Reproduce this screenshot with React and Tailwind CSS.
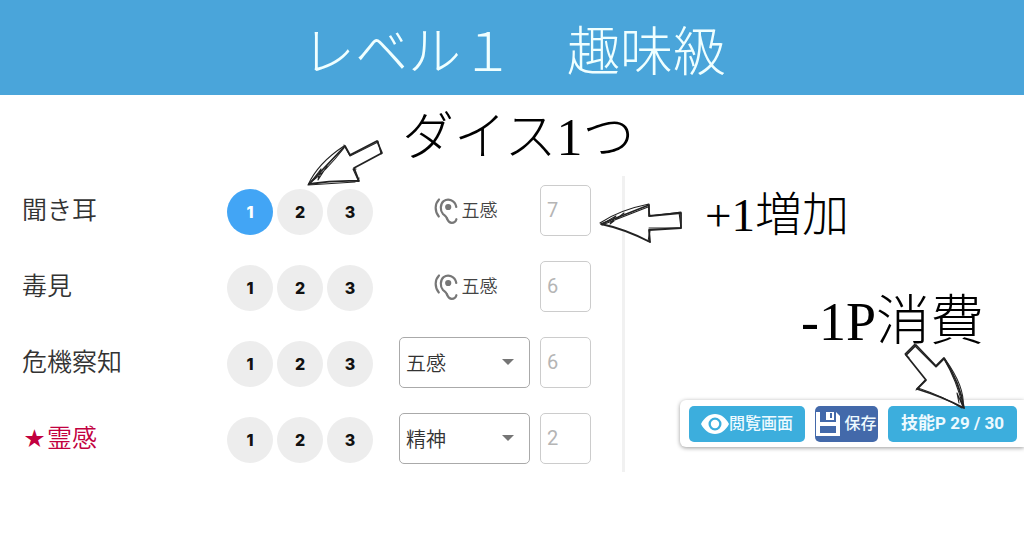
import React, { useState } from 'react';
import clsx from 'clsx';

const sans = "font-['Roboto','Noto_Sans_CJK_JP',sans-serif]";
const serif = "font-['Liberation_Serif','Noto_Sans_CJK_JP',serif]";

const initialSkills = [
  { name: '聞き耳', level: 1, attribute: '五感', value: 7 },
  { name: '毒見', level: 0, attribute: '五感', value: 6 },
  { name: '危機察知', level: 0, attribute: '五感', value: 6, options: ['五感', '知力'] },
  { name: '霊感', level: 0, attribute: '精神', value: 2, options: ['精神', '五感'], special: true },
];

const EarIcon = () => (
  <svg viewBox="0 0 24 28" className="h-7 w-6 shrink-0" fill="none" stroke="#777" strokeWidth="2.2" strokeLinecap="round" aria-hidden="true">
    <path d="M5 2.5C.6 7 .6 14.5 4.8 19.5" />
    <path d="M13 21.5C11.8 18.8 10.6 18.6 9 17 5.8 13.5 6.2 7 9.6 4.2 14 1 21 3 22.3 10" />
    <path d="M13 21.5c1 2.6 2 4.3 4.8 4.3 2.3 0 4-1.4 4.6-3.6" />
    <circle cx="14.2" cy="10" r="3.1" fill="#777" stroke="none" />
  </svg>
);

const EyeIcon = () => (
  <svg viewBox="0 0 28 20" className="h-5 w-7 shrink-0" aria-hidden="true">
    <path fill="#fff" fillRule="evenodd" d="M0 10C3 4 8 0 14 0s11 4 14 10c-3 6-8 10-14 10S3 16 0 10Zm14-6.5a6.5 6.5 0 1 0 0 13 6.5 6.5 0 0 0 0-13Z" />
    <circle cx="14" cy="10" r="4.2" fill="#fff" />
  </svg>
);

const SaveIcon = () => (
  <svg viewBox="0 0 24 24" className="size-6 shrink-0" aria-hidden="true">
    <path fill="#fff" fillRule="evenodd" d="M0 0h4v10h16V0l4 4v20H0ZM4 14v7h16v-7Z" />
    <path fill="#fff" fillRule="evenodd" d="M10 0h8v8h-8ZM14 1v5h2V1Z" />
  </svg>
);

// Hand-drawn arrows: one main outline and a looser second pass
const SketchArrow = ({ className, viewBox, outline, loose }) => (
  <svg viewBox={viewBox} className={clsx('pointer-events-none absolute', className)} fill="none" stroke="#222" strokeLinecap="round" strokeLinejoin="round" aria-hidden="true">
    <path d={outline} fill="#fff" strokeWidth="1.8" />
    <path d={loose} strokeWidth="1.1" />
  </svg>
);

const SkillRow = ({ skill }) => {
  const [level, setLevel] = useState(skill.level);

  return (
    <li className="flex h-13 items-center">
      <span className={clsx('flex flex-1 items-center pt-0.5 text-[25px] leading-8 font-[350]', skill.special ? 'text-[#c2003f]' : 'text-[#333]')}>
        {skill.special && <span className="w-[25px] text-center text-xl leading-8">★</span>}
        {skill.name}
      </span>
      <div className="mt-1 flex gap-1" role="group" aria-label={skill.name}>
        {[1, 2, 3].map((n) => (
          <button
            key={n}
            type="button"
            aria-pressed={level === n}
            onClick={() => setLevel(level === n ? 0 : n)}
            className={clsx(
              "size-[46px] rounded-full font-['Inter',sans-serif] text-base font-extrabold",
              level === n ? 'bg-[#42a5f5] text-white' : 'bg-[#ededed] text-[#111]'
            )}
          >
            {n}
          </button>
        ))}
      </div>
      <div className="ml-[26px] w-[131px]">
        {skill.options ? (
          <div className="relative">
            <select
              aria-label={`${skill.name} ${skill.attribute}`}
              defaultValue={skill.attribute}
              className="h-[51px] w-full appearance-none rounded-[5px] border border-[#aaa] bg-white pt-1 pl-1.5 text-xl font-[350] text-[#333]"
            >
              {skill.options.map((o) => (
                <option key={o}>{o}</option>
              ))}
            </select>
            <svg viewBox="0 0 12 6" className="pointer-events-none absolute top-[22px] right-4 h-[6px] w-3" fill="#757575" aria-hidden="true">
              <path d="M0 0h12L6 6Z" />
            </svg>
          </div>
        ) : (
          <div className="flex items-center justify-center gap-1 pt-0.5 pl-0.5 text-lg font-[350] text-[#444]">
            <EarIcon />
            <span>{skill.attribute}</span>
          </div>
        )}
      </div>
      <input
        disabled
        aria-label={`${skill.name} 値`}
        defaultValue={skill.value}
        className="ml-2.5 h-[51px] w-[51px] rounded-[5px] border border-[#ccc] bg-white pl-1.5 text-xl text-[#b5b5b5]"
      />
    </li>
  );
};

const Toolbar = () => (
  <div className="flex h-[47px] items-center gap-2.5 rounded-l-md bg-white pr-[7px] pl-[9px] text-base font-bold text-[#eefaff] shadow-[0_1px_4px_rgba(0,0,0,0.4)]">
    <button type="button" className="flex h-9 w-[116px] items-center justify-center rounded-[5px] bg-[#3caedd] font-medium">
      <EyeIcon />
      <span>閲覧画面</span>
    </button>
    <button type="button" className="flex h-9 w-[63px] items-center justify-center gap-1 rounded-[5px] bg-[#4369aa] font-medium">
      <SaveIcon />
      <span>保存</span>
    </button>
    <button type="button" className="h-9 w-[129px] rounded-[5px] bg-[#3caedd] text-[17px]">
      技能P 29 / 30
    </button>
  </div>
);

export default function App() {
  return (
    <div className={clsx('min-h-screen bg-white', sans)}>
      <header className="flex h-[95px] items-center justify-center bg-[#4aa5da] pt-3 pl-1">
        <h1 className={clsx('text-[53px] leading-none font-light text-[#f0ffff]', serif)}>レベル１　趣味級</h1>
      </header>
      <main className={serif}>
        <div className="relative z-10 flex h-[81px] items-center pt-1 pl-[402px]">
          <p className="text-[52px] leading-none font-light text-black">ダイス1つ</p>
          <SketchArrow
            className="top-[44px] left-[306px] h-[48px] w-[80px]"
            viewBox="0 0 80 48"
            outline="M3 45 39 7l5 9 27-14 5 12-28 15 5 13Q28 41 3 45Z"
            loose="M2 46Q12 24 38 7M4 44Q20 32 38 9M5 43l10-13-3 11 9-14M38 6l6 11 28-14M72 2l3 13M50 30l-3 0 5 11 1-2M49 43 2 46"
          />
        </div>
        <div className="flex">
          <div className={clsx('relative w-[625px] shrink-0 border-r-3 border-[#f1f1f1] py-2 pr-[31px] pl-[22px]', sans)}>
            <ul className="flex flex-col gap-6">
              {initialSkills.map((skill) => (
                <SkillRow key={skill.name} skill={skill} />
              ))}
            </ul>
            <SketchArrow
              className="top-[26px] left-[599px] h-[42px] w-[86px]"
              viewBox="0 0 86 42"
              outline="M2 22 50 3v11l32-3v15l-32 2 1 12Q26 27 2 22Z"
              loose="M1 21Q20 8 50 2M3 23 49 5M5 21l12-7-6 8 14-11M49 2l2 12 31-4M80 10l2 16M51 29l-2 10 2 1M50 26h31"
            />
          </div>
          <div className="relative flex-1">
            <p className="pt-4 pl-20 text-[47px] leading-none font-light text-black">+1増加</p>
            <p className="pt-14 pr-10 text-right text-[54px] leading-none font-light text-black">-1P消費</p>
            <div className={clsx('mt-[51px] flex justify-end', sans)}>
              <Toolbar />
            </div>
            <SketchArrow
              className="top-[167px] right-[57px] h-[66px] w-[64px]"
              viewBox="0 0 64 66"
              outline="M13 2 3 12l20 25-9 9Q40 54 61 65 57 40 41 15l-8 8Z"
              loose="M12 1 2 11l4 4M12 3l21 21 8-8M41 16q13 22 19 48M42 16q20 28 18 47M60 64l-6-14 2 10M15 45q24 8 44 20M22 37l-9 10"
            />
          </div>
        </div>
      </main>
    </div>
  );
}
